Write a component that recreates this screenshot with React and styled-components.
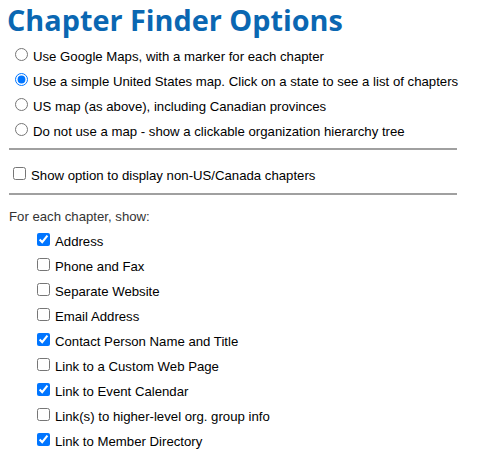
import React from "react";
import styled, { createGlobalStyle } from "styled-components";

const Global = createGlobalStyle`
  html, body { margin: 0; padding: 0; background: #fff; }
  body { font-family: Arial, "Liberation Sans", sans-serif; font-size: 13.2px; color: #000; }
`;

const Page = styled.div`
  padding: 0 21px 0 9px;
`;

const Title = styled.h1`
  margin: 0 0 0 -2px;
  padding: 0 0 4px 0;
  font-family: "Open Sans", sans-serif;
  font-weight: 700;
  font-size: 28.8px;
  line-height: 40px;
  color: #0a67b2;
  white-space: nowrap;
`;

const Group = styled.div`
  display: flex;
  flex-direction: column;
  padding-left: ${(p) => p.$indent || 0}px;
`;

const Row = styled.label`
  display: flex;
  align-items: center;
  height: 25px;
  gap: 5px;
  white-space: nowrap;
`;

const Radio = styled.input.attrs({ type: "radio" })`
  margin: 0 0 0 6px;
  width: 13px;
  height: 13px;
  position: relative;
  top: -2px;
`;

const Check = styled.input.attrs({ type: "checkbox" })`
  margin: 0 0 0 4px;
  width: 13px;
  height: 13px;
  position: relative;
  top: -2px;
`;

const Rule = styled.hr`
  border: none;
  border-top: 2px solid #a0a0a0;
  margin: ${(p) => p.$m || "0"};
  height: 0;
`;

const Caption = styled.div`
  height: 25px;
  display: flex;
  align-items: center;
  color: #333;
`;

const radios = [
  ["Use Google Maps, with a marker for each chapter", false],
  ["Use a simple United States map. Click on a state to see a list of chapters", true],
  ["US map (as above), including Canadian provinces", false],
  ["Do not use a map - show a clickable organization hierarchy tree", false],
];

const checks = [
  ["Address", true],
  ["Phone and Fax", false],
  ["Separate Website", false],
  ["Email Address", false],
  ["Contact Person Name and Title", true],
  ["Link to a Custom Web Page", false],
  ["Link to Event Calendar", true],
  ["Link(s) to higher-level org. group info", false],
  ["Link to Member Directory", true],
];

export default function App() {
  return (
    <Page>
      <Global />
      <Title>Chapter Finder Options</Title>
      <Group>
        {radios.map(([t, c]) => (
          <Row key={t}>
            <Radio name="mode" defaultChecked={c} />
            <span>{t}</span>
          </Row>
        ))}
      </Group>
      <Rule $m="4px 0 13px 0" />
      <Group>
        <Row>
          <Check />
          <span>Show option to display non-US/Canada chapters</span>
        </Row>
      </Group>
      <Rule $m="5px 0 9px 0" />
      <Caption>For each chapter, show:</Caption>
      <Group $indent={24}>
        {checks.map(([t, c]) => (
          <Row key={t}>
            <Check defaultChecked={c} />
            <span>{t}</span>
          </Row>
        ))}
      </Group>
    </Page>
  );
}
